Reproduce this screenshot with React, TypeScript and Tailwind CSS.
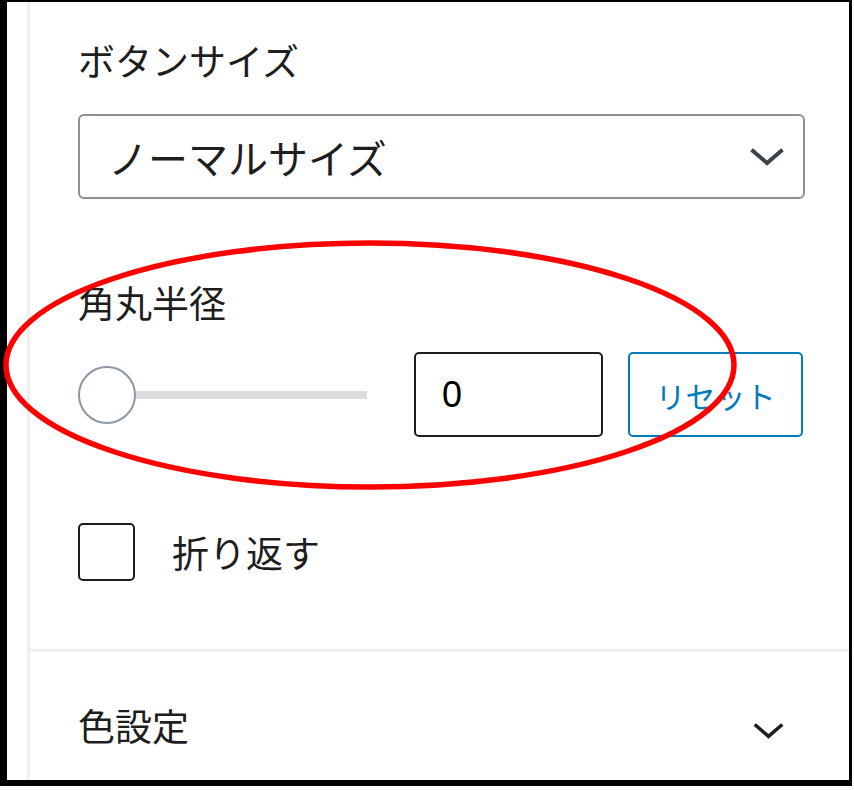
const jp = { fontFamily: '"Noto Sans CJK JP", "Noto Sans", sans-serif' }

function Chevron({ className }: { className: string }) {
    return (
        <svg className={className} viewBox="0 0 34 18" fill="none" stroke="currentColor" strokeWidth="4" strokeLinecap="square">
            <polyline points="3 3 17 15 31 3" />
        </svg>
    )
}

export default function App() {
    return (
        <div className="relative w-[854px] h-[790px] bg-white text-[#1e1e1e]" style={jp}>
            <div className="w-[852px] h-[786px] border-solid border-black border-l-[7px] border-t-2 border-r-[3px] border-b-[6px] pl-5 overflow-hidden">
                <div className="h-full border-l-[3px] border-solid border-[#f0f0f0]">
                    {/* Block settings */}
                    <div className="pl-12 pr-11 pt-9">
                        <div className="h-11 text-[37px] leading-[44px]">ボタンサイズ</div>

                        <div className="mt-8 h-[85px] flex items-center justify-between border-2 border-solid border-[#8c8f94] rounded-md pl-7 pr-[19px]">
                            <span className="text-[40px] leading-none">ノーマルサイズ</span>
                            <Chevron className="w-[34px] h-[18px] text-[#3c434a]" />
                        </div>

                        <div className="mt-[81px] h-11 text-[37px] leading-[44px]">角丸半径</div>

                        <div className="mt-7 h-[85px] flex items-center">
                            <div className="relative w-[289px] h-[58px] flex items-center">
                                <div className="w-full h-2 bg-[#dcdcde]" />
                                <div className="absolute left-0 top-0 w-[58px] h-[58px] rounded-full border-2 border-solid border-[#8c98a6] bg-white" />
                            </div>
                            <div className="ml-[47px] w-[189px] h-[85px] flex items-center border-2 border-solid border-[#1e1e1e] rounded-[5px] pl-[26px]">
                                <span className="text-[36px] leading-none text-black" style={{ fontFamily: '"Liberation Sans", Arial, sans-serif' }}>0</span>
                            </div>
                            <button className="ml-[25px] w-[175px] h-[85px] flex items-center justify-center border-2 border-solid border-[#007cba] rounded-[5px] text-[#007cba] text-[30px] leading-none bg-white">
                                リセット
                            </button>
                        </div>

                        <div className="mt-[86px] h-[58px] flex items-center">
                            <div className="w-[57px] h-[58px] border-2 border-solid border-[#1e1e1e] rounded-[5px]" />
                            <span className="ml-[37px] text-[37px] leading-[44px]">折り返す</span>
                        </div>
                    </div>

                    <div className="mt-[68px] h-[3px] bg-[#f0f0f0]" />

                    {/* Colour panel header */}
                    <div className="mt-[51px] pl-12 pr-[65px] h-11 flex items-center justify-between">
                        <span className="text-[37px] leading-[44px]">色設定</span>
                        <Chevron className="w-[31px] h-[16px] mt-3 text-[#1e1e1e]" />
                    </div>
                </div>
            </div>

            {/* red annotation */}
            <svg className="absolute left-0 top-0 pointer-events-none" width="854" height="790">
                <ellipse cx="370" cy="365" rx="364" ry="122" fill="none" stroke="#ff0000" strokeWidth="5.5" />
            </svg>
        </div>
    )
}
